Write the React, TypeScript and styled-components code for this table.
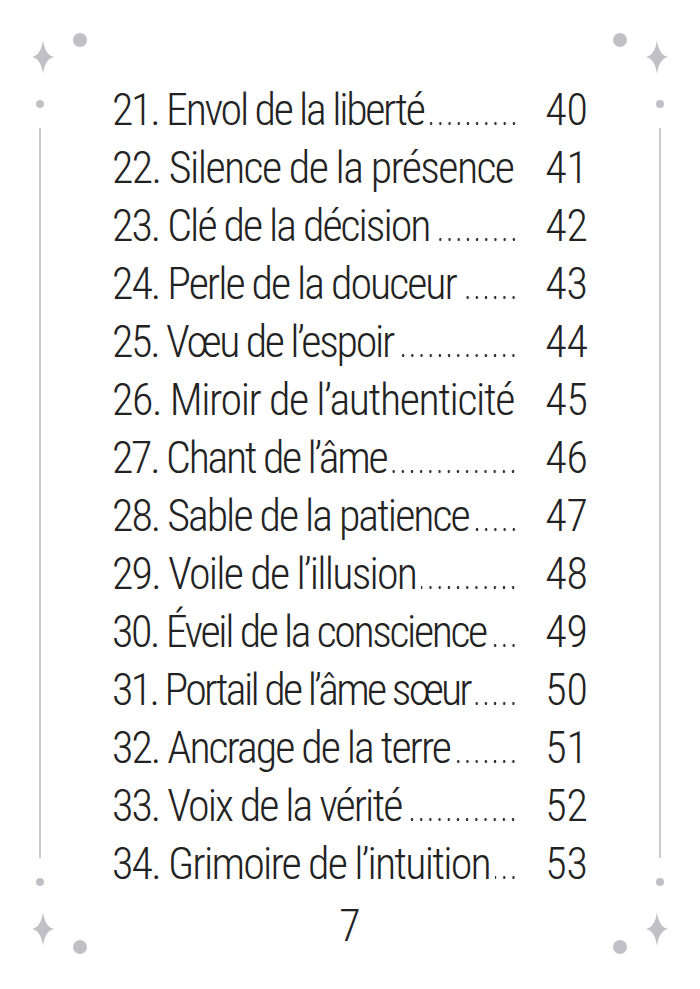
import React from 'react';
import styled, {createGlobalStyle} from 'styled-components';

const GlobalStyle = createGlobalStyle`
  html, body {
    margin: 0;
    padding: 0;
    background: #ffffff;
  }
  body {
    font-family: Roboto, "Liberation Sans", sans-serif;
  }
`;

interface TocEntry {
    num: number;
    title: string;
    page: number;
    track?: number;
}

// track = letter-spacing of the title, the printed page sets some lines tighter than others
const entries: TocEntry[] = [
    {num: 21, title: 'Envol de la liberté', page: 40, track: -2.3},
    {num: 22, title: 'Silence de la présence', page: 41, track: -1.6},
    {num: 23, title: 'Clé de la décision', page: 42},
    {num: 24, title: 'Perle de la douceur', page: 43},
    {num: 25, title: 'Vœu de l’espoir', page: 44, track: -2.3},
    {num: 26, title: 'Miroir de l’authenticité', page: 45, track: -1.4},
    {num: 27, title: 'Chant de l’âme', page: 46, track: -2.3},
    {num: 28, title: 'Sable de la patience', page: 47},
    {num: 29, title: 'Voile de l’illusion', page: 48, track: -1.8},
    {num: 30, title: 'Éveil de la conscience', page: 49, track: -2.4},
    {num: 31, title: 'Portail de l’âme sœur', page: 50, track: -2.7},
    {num: 32, title: 'Ancrage de la terre', page: 51},
    {num: 33, title: 'Voix de la vérité', page: 52},
    {num: 34, title: 'Grimoire de l’intuition', page: 53, track: -1.8},
];

const DECO = '#c0c0c6';

function Corner({mirror, bottom}: { mirror?: boolean; bottom?: boolean }) {
    // star + round dot, drawn for the left side and flipped for the right
    const starY = bottom ? 23 : 27;
    const dotY = bottom ? 41 : 10;
    const cx = 43;
    const star = `M${cx} ${starY - 17} Q${cx + 2} ${starY - 2} ${cx + 11} ${starY} Q${cx + 2} ${starY + 2} ${cx} ${starY + 17} Q${cx - 2} ${starY + 2} ${cx - 11} ${starY} Q${cx - 2} ${starY - 2} ${cx} ${starY - 17} Z`;
    return (
        <CornerSvg viewBox="0 0 88 50" width={88} height={50}>
            <g transform={mirror ? 'translate(88 0) scale(-1 1)' : undefined}>
                <path d={star} fill={DECO}/>
                <circle cx={80} cy={dotY} r={7} fill={DECO}/>
            </g>
        </CornerSvg>
    );
}

export default function App() {
    return (
        <Page>
            <GlobalStyle/>
            <Rail>
                <Corner/>
                <SmallDot/>
                <RailLine/>
                <SmallDot/>
                <Corner bottom/>
            </Rail>

            <Content>
                <TocList>
                    {entries.map(e => (
                        <TocRow key={e.num}>
                            <Title $track={e.track ?? -2}>{e.num}. {e.title}</Title>
                            <Leader/>
                            <PageNum>{e.page}</PageNum>
                        </TocRow>
                    ))}
                </TocList>
                <Folio>7</Folio>
            </Content>

            <Rail $right>
                <Corner mirror/>
                <SmallDot/>
                <RailLine/>
                <SmallDot/>
                <Corner mirror bottom/>
            </Rail>
        </Page>
    );
}

const Page = styled.div`
  display: flex;
  flex-direction: row;
  width: 700px;
  height: 989px;
  background: #ffffff;
  overflow: hidden;
`

const Rail = styled.div<{ $right?: boolean }>`
  display: flex;
  flex-direction: column;
  align-items: ${p => p.$right ? 'flex-end' : 'flex-start'};
  width: 88px;
  flex: none;
  padding-top: 30px;
  padding-bottom: 33px;
  box-sizing: border-box;
`

const CornerSvg = styled.svg`
  display: block;
  flex: none;
`

const SmallDot = styled.div`
  width: 8px;
  height: 8px;
  border-radius: 50%;
  background: ${DECO};
  margin: 20px 36px;
  flex: none;
`

const RailLine = styled.div`
  width: 2px;
  flex: 1;
  background: #cbcbd0;
  margin: 0 39px;
`

const Content = styled.div`
  flex: 1;
  min-width: 0;
  display: flex;
  flex-direction: column;
  padding: 81px 24px 0;
`

const TocList = styled.div`
  display: flex;
  flex-direction: column;
`

const TocRow = styled.div`
  display: flex;
  flex-direction: row;
  align-items: baseline;
  height: 58px;
  line-height: 58px;
  font-family: Roboto, "Liberation Sans", sans-serif;
  font-stretch: condensed;
  font-weight: 300;
  font-size: 44px;
  color: #222222;
  white-space: nowrap;
`

const Title = styled.span<{ $track: number }>`
  flex: 0 1 auto;
  min-width: 0;
  letter-spacing: ${p => p.$track}px;
`

const Leader = styled.span`
  flex: 1 1 0;
  min-width: 0;
  height: 3px;
  margin-left: 5px;
  background-image: radial-gradient(circle, #333333 1.1px, transparent 1.5px);
  background-size: 9.2px 3px;
  background-repeat: repeat-x;
  background-position: right bottom;
`

const PageNum = styled.span`
  flex: none;
  width: 70px;
  text-align: right;
  letter-spacing: 0;
`

const Folio = styled.div`
  text-align: center;
  font-family: Roboto, "Liberation Sans", sans-serif;
  font-stretch: condensed;
  font-weight: 300;
  font-size: 44px;
  line-height: 58px;
  margin-top: 4px;
  color: #222222;
`
